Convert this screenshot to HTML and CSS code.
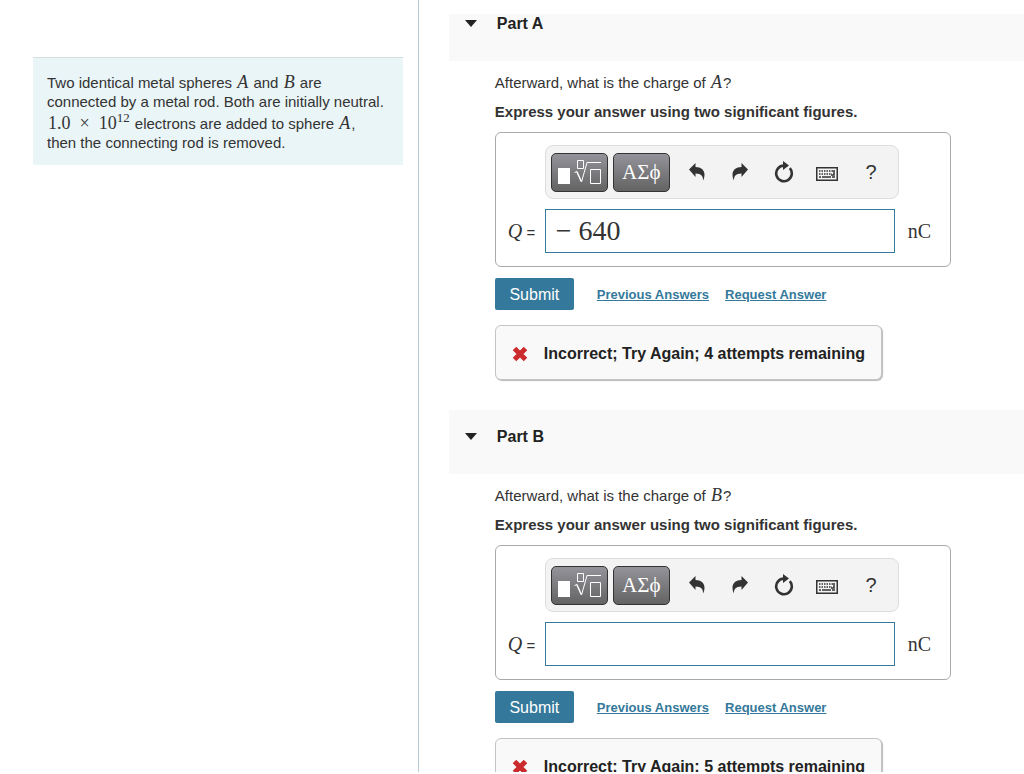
FILE: index.html
```html
<!DOCTYPE html>
<html lang="en">

<head>
    <meta charset="UTF-8">
    <meta name="viewport" content="width=device-width, initial-scale=1.0">
    <title>Metal Spheres</title>
    <link rel="stylesheet" href="styles.css">
</head>

<body>

    <!-- icons shared by both parts -->
    <svg class="sprite" aria-hidden="true">
        <symbol id="icon-template" viewBox="0 0 46 28">
            <path d="M2 10h12v16H2z" fill="#fff" />
            <g fill="none" stroke="#fff">
                <path d="M21.500 2.500h6v8h-6z" />
                <path d="M34.500 11.500h10v14h-10z" />
                <path d="M18.500 14.500l2.500-1M25.500 24l5.500-19.500h14" />
                <path d="M20.800 13.500l4.500 10" stroke-width="1.500" />
            </g>
        </symbol>
        <symbol id="icon-undo" viewBox="0 0 16 18">
            <path d="M0 6.500L6.500 0v4C12 4 15.500 7 15.500 11.500c0 2.500-.6 4.500-1.500 6 .3-4-1.500-7-7.500-7v3.500z" fill="#333" />
        </symbol>
        <symbol id="icon-reset" viewBox="0 0 20 22">
            <path d="M15.800 7.200A7.800 7.800 0 1 1 10 4.600" fill="none" stroke="#333" stroke-width="2.600" />
            <path d="M9 0l6 4.500-6 4.500z" fill="#333" />
        </symbol>
        <symbol id="icon-keyboard" viewBox="0 0 22 14">
            <path d="M.75.75h20.500v12.500H.75z" fill="none" stroke="#333" stroke-width="1.500" />
            <path d="M3 4h14M3 7h13" fill="none" stroke="#333" stroke-width="1.500" stroke-dasharray="1.500 1" />
            <path d="M3 10h2M6 10h9M16 10h3M18 3v5h-3" fill="none" stroke="#333" stroke-width="1.500" />
        </symbol>
        <symbol id="icon-cross" viewBox="0 0 16 16">
            <path d="M2.500 2.500l11 11M13.500 2.500l-11 11" fill="none" stroke="#cc2b2e" stroke-width="5" />
        </symbol>
    </svg>

    <div class="page">
        <!-- left: problem statement -->
        <aside class="problem">
            <div class="statement">
                Two identical metal spheres <i class="math">A</i> and <i class="math">B</i> are connected by a metal rod. Both are initially neutral. <span class="math">1.0 &nbsp;×&nbsp; 10<sup>12</sup></span> electrons are added to sphere <i class="math">A</i>, then the connecting rod is removed.
            </div>
        </aside>

        <!-- right: answer parts -->
        <main class="parts">
            <section class="part">
                <h2 class="part_title"><button class="toggle" type="button"><span class="caret"></span>Part A</button></h2>
                <div class="part_body">
                    <p>Afterward, what is the charge of <i class="math">A</i>?</p>
                    <p class="hint">Express your answer using two significant figures.</p>
                    <div class="answer">
                        <div class="toolbar">
                            <button class="key" type="button" aria-label="Templates"><svg width="46" height="28"><use href="#icon-template" /></svg></button>
                            <button class="key" type="button">ΑΣϕ</button>
                            <button class="tool" type="button" aria-label="Undo"><svg width="16" height="18"><use href="#icon-undo" /></svg></button>
                            <button class="tool" type="button" aria-label="Redo"><svg class="flip" width="16" height="18"><use href="#icon-undo" /></svg></button>
                            <button class="tool" type="button" aria-label="Reset"><svg width="20" height="22"><use href="#icon-reset" /></svg></button>
                            <button class="tool" type="button" aria-label="Keyboard shortcuts"><svg class="keyboard" width="22" height="14"><use href="#icon-keyboard" /></svg></button>
                            <button class="tool" type="button">?</button>
                        </div>
                        <label class="symbol" for="answer_a"><i>Q</i> =</label>
                        <input class="value" id="answer_a" type="text" value="− 640">
                        <span class="unit">nC</span>
                    </div>
                    <div class="actions">
                        <button class="submit" type="button">Submit</button>
                        <a href="#">Previous Answers</a>
                        <a href="#">Request Answer</a>
                    </div>
                    <div class="feedback">
                        <svg width="16" height="16"><use href="#icon-cross" /></svg>
                        <span>Incorrect; Try Again; 4 attempts remaining</span>
                    </div>
                </div>
            </section>

            <section class="part">
                <h2 class="part_title"><button class="toggle" type="button"><span class="caret"></span>Part B</button></h2>
                <div class="part_body">
                    <p>Afterward, what is the charge of <i class="math">B</i>?</p>
                    <p class="hint">Express your answer using two significant figures.</p>
                    <div class="answer">
                        <div class="toolbar">
                            <button class="key" type="button" aria-label="Templates"><svg width="46" height="28"><use href="#icon-template" /></svg></button>
                            <button class="key" type="button">ΑΣϕ</button>
                            <button class="tool" type="button" aria-label="Undo"><svg width="16" height="18"><use href="#icon-undo" /></svg></button>
                            <button class="tool" type="button" aria-label="Redo"><svg class="flip" width="16" height="18"><use href="#icon-undo" /></svg></button>
                            <button class="tool" type="button" aria-label="Reset"><svg width="20" height="22"><use href="#icon-reset" /></svg></button>
                            <button class="tool" type="button" aria-label="Keyboard shortcuts"><svg class="keyboard" width="22" height="14"><use href="#icon-keyboard" /></svg></button>
                            <button class="tool" type="button">?</button>
                        </div>
                        <label class="symbol" for="answer_b"><i>Q</i> =</label>
                        <input class="value" id="answer_b" type="text">
                        <span class="unit">nC</span>
                    </div>
                    <div class="actions">
                        <button class="submit" type="button">Submit</button>
                        <a href="#">Previous Answers</a>
                        <a href="#">Request Answer</a>
                    </div>
                    <div class="feedback">
                        <svg width="16" height="16"><use href="#icon-cross" /></svg>
                        <span>Incorrect; Try Again; 5 attempts remaining</span>
                    </div>
                </div>
            </section>
        </main>
    </div>

</body>

</html>
```
FILE: styles.css
```css
* {
    margin: 0;
    padding: 0;
    box-sizing: border-box;
}

body {
    height: 100vh;
    padding-bottom: 2px;
    overflow: hidden;
    background: #fff;
    color: #333;
    font: 15px/19px "Liberation Sans", Arial, sans-serif;
}

button {
    border: 0;
    background: none;
    color: inherit;
    font: inherit;
    cursor: pointer;
}

svg {
    display: block;
}

.sprite {
    display: none;
}

.page {
    display: flex;
    height: 100%;
    overflow: hidden;
}

/* left column */
.problem {
    width: 40.9%;
    padding: 57px 15px 0 33px;
    border-right: 1px solid #b8cad6;
    flex: none;
}

.statement {
    padding: 15px 17px 13px 14px;
    border-top: 1px solid #d5dfdf;
    background: #eaf5f7;
}

.math {
    margin: 0 1px;
    font-family: "Liberation Serif", "Times New Roman", serif;
    font-size: 18px;
    line-height: 18px;
}

.math sup {
    font-size: 13px;
    line-height: 13px;
}

/* right column */
.parts {
    flex: 1;
    padding: 14px 0 0 30px;
    overflow: hidden;
}

.part_title {
    height: 64px;
    padding: 0 16px 11px;
    display: flex;
    align-items: center;
    background: #f9f9f9;
    font-size: 16px;
    color: #222;
}

.part:first-child .part_title {
    height: 47px;
    align-items: flex-start;
}

.toggle {
    display: flex;
    align-items: center;
    gap: 20px;
}

.caret {
    border: 6px solid transparent;
    border-top: 7px solid #222;
    border-bottom: 0;
}

.part_body {
    padding: 12px 0 30px 46px;
}

.part_body p {
    margin-bottom: 10px;
}

.part_body .hint {
    margin-bottom: 11px;
    font-weight: bold;
}

.answer {
    width: 456px;
    max-width: 100%;
    padding: 12px 12px 13px;
    border: 1px solid #aaa;
    border-radius: 6px;
    display: grid;
    grid-template-columns: 37px 1fr 43px;
    row-gap: 10px;
    align-items: center;
}

.toolbar {
    grid-column: 2 / 4;
    width: 354px;
    height: 54px;
    padding: 0 5px;
    border: 1px solid #ddd;
    border-radius: 8px;
    display: flex;
    align-items: center;
    background: #f3f3f3;
}

.key {
    width: 57px;
    height: 39px;
    margin-right: 5px;
    border: 1px solid #333;
    border-radius: 5px;
    display: flex;
    align-items: center;
    justify-content: center;
    background: linear-gradient(#94939a, #636363);
    color: #fff;
    font: 21px "Liberation Serif", "Times New Roman", serif;
}

.tool {
    flex: 1;
    display: flex;
    justify-content: center;
    font-size: 20px;
}

.flip {
    transform: scaleX(-1);
}

.keyboard {
    margin-top: 3px;
}

.value {
    width: 100%;
    height: 44px;
    padding: 0 10px;
    border: 1px solid #337a9b;
    color: #333;
    font: 28px "Liberation Serif", "Times New Roman", serif;
}

.symbol i {
    font: italic 20px "Liberation Serif", "Times New Roman", serif;
}

.unit {
    padding-left: 13px;
    font: 20px "Liberation Serif", "Times New Roman", serif;
}

.actions {
    margin: 11px 0 15px;
    display: flex;
    align-items: center;
    gap: 16px;
}

.submit {
    width: 79px;
    height: 32px;
    margin-right: 7px;
    border-radius: 2px;
    background: #34799b;
    color: #fff;
    font-size: 16px;
}

.actions a {
    color: #34799b;
    font-size: 13px;
    font-weight: bold;
}

.feedback {
    width: 387px;
    max-width: 100%;
    height: 55px;
    padding: 2px 10px 0 16px;
    border: 1px solid #c4c4c4;
    border-radius: 6px;
    box-shadow: 1px 1px 1px #bbb;
    display: flex;
    align-items: center;
    gap: 16px;
    background: #f9f9f9;
    color: #222;
    font-size: 16px;
    font-weight: bold;
    white-space: nowrap;
}
```
